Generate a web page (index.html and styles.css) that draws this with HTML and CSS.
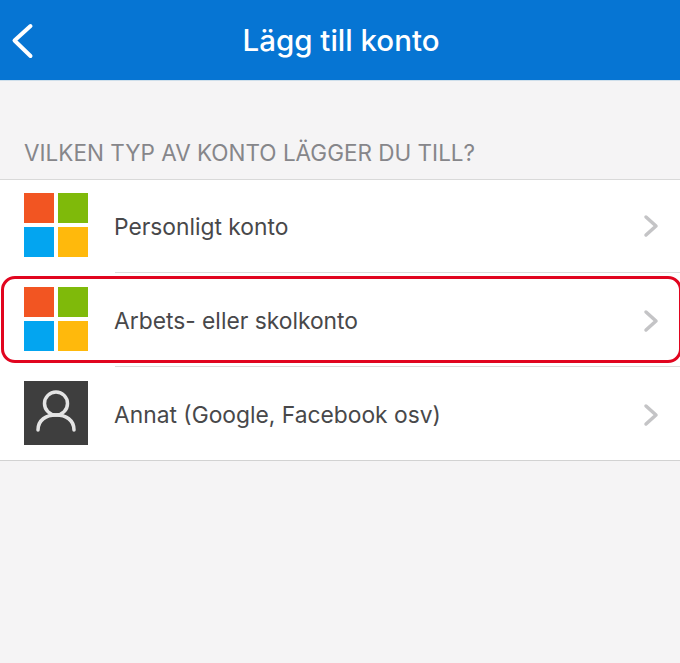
FILE: index.html
```html
<!DOCTYPE html>
<html lang="sv">
  <head>
    <meta charset="UTF-8" />
    <meta name="viewport" content="width=device-width, initial-scale=1.0" />
    <title>Lägg till konto</title>
    <link rel="stylesheet" href="styles.css">
  </head>
  <body>
    <header class="topbar">
      <svg class="back" width="24" height="36" viewBox="0 0 24 36">
        <path d="M20.5 3 L4.5 17.5 L20.5 33" />
      </svg>
      <h1>Lägg till konto</h1>
    </header>

    <h2 class="section-title">VILKEN TYP AV KONTO LÄGGER DU TILL?</h2>

    <ul class="accounts">
      <li class="row">
        <svg class="logo" width="64" height="64" viewBox="0 0 64 64">
          <rect width="30" height="30" fill="#f25522" />
          <rect x="34" width="30" height="30" fill="#7fba0a" />
          <rect y="34" width="30" height="30" fill="#03a5f0" />
          <rect x="34" y="34" width="30" height="30" fill="#ffb90c" />
        </svg>
        <div class="row-body">
          <span class="row-label">Personligt konto</span>
          <svg class="chevron" width="16" height="24" viewBox="0 0 16 24"><path d="M3 3 L13 12 L3 21" /></svg>
        </div>
      </li>
      <li class="row row-marked">
        <svg class="logo" width="64" height="64" viewBox="0 0 64 64">
          <rect width="30" height="30" fill="#f25522" />
          <rect x="34" width="30" height="30" fill="#7fba0a" />
          <rect y="34" width="30" height="30" fill="#03a5f0" />
          <rect x="34" y="34" width="30" height="30" fill="#ffb90c" />
        </svg>
        <div class="row-body">
          <span class="row-label">Arbets- eller skolkonto</span>
          <svg class="chevron" width="16" height="24" viewBox="0 0 16 24"><path d="M3 3 L13 12 L3 21" /></svg>
        </div>
      </li>
      <li class="row">
        <svg class="logo" width="64" height="64" viewBox="0 0 64 64">
          <rect width="64" height="64" fill="#3e3e3e" />
          <circle cx="32" cy="22.5" r="11.5" class="person" />
          <path d="M14 49 C14 39 22 34 32 34 C42 34 50 39 50 49" class="person" />
        </svg>
        <div class="row-body">
          <span class="row-label">Annat (Google, Facebook osv)</span>
          <svg class="chevron" width="16" height="24" viewBox="0 0 16 24"><path d="M3 3 L13 12 L3 21" /></svg>
        </div>
      </li>
    </ul>
  </body>
</html>
```

FILE: styles.css
```css
body {
  font-family: Inter, "Liberation Sans", sans-serif;
  background-color: #f5f4f5;
  margin: 0;
  height: 663px;
  overflow: hidden;
}
.topbar {
  height: 80px;
  background-color: #0675d3;
  border-bottom: 1px solid #cfdfeb;
  display: flex;
  align-items: center;
  justify-content: center;
  position: relative;
}
.topbar h1 {
  margin: 0 0 0 2px;
  color: white;
  font-size: 29.5px;
  font-weight: 500;
}
.back {
  position: absolute;
  left: 10px;
  top: 23px;
  fill: none;
  stroke: white;
  stroke-width: 4;
  stroke-linecap: round;
  stroke-linejoin: round;
}
.section-title {
  margin: 0;
  padding: 60px 0 14px 24px;
  color: #86868a;
  font-size: 22.5px;
  line-height: 24px;
  font-weight: 400;
}
.accounts {
  list-style: none;
  margin: 0;
  padding: 0;
  background: white;
  border-top: 1px solid #d9d9d9;
  border-bottom: 1px solid #d2d2d2;
}
.row {
  height: 94px;
  display: flex;
  align-items: stretch;
  padding-left: 24px;
  position: relative;
}
.row:first-child {
  height: 93px;
}
.row:last-child {
  height: 93px;
}
.logo {
  flex: none;
  margin: 14px 27px 0 0;
}
.row:first-child .logo {
  margin-top: 13px;
}
.row-body {
  flex: 1;
  display: flex;
  align-items: center;
  justify-content: space-between;
  padding: 2px 21px 0 0;
  border-bottom: 1px solid #dcdcdc;
}
.row:first-child .row-body {
  padding-top: 0;
}
.row:last-child .row-body {
  border-bottom: none;
}
.row-label {
  margin-left: -1px;
  color: #48484a;
  font-size: 22.8px;
}
.chevron {
  fill: none;
  stroke: #c4c4c6;
  stroke-width: 3.5;
  stroke-linecap: round;
  stroke-linejoin: round;
}
.person {
  fill: none;
  stroke: #e4e4e4;
  stroke-width: 3.5;
  stroke-linecap: round;
}
.row-marked::after {
  content: "";
  position: absolute;
  left: 1px;
  right: -2px;
  top: 3px;
  bottom: 4px;
  border: 3px solid #e1051f;
  border-radius: 14px;
  pointer-events: none;
}
```
